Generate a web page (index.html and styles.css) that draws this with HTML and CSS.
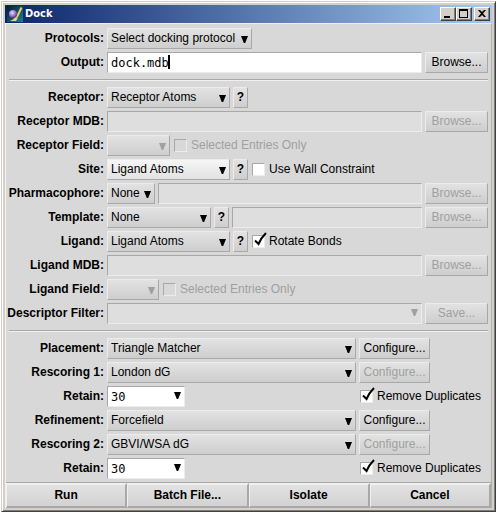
FILE: index.html
```html
<!DOCTYPE html>
<html lang="en">
<head>
<meta charset="utf-8">
<title>Dock</title>
<link rel="stylesheet" href="styles.css">
</head>
<body>
<main class="window">
  <header class="titlebar">
    <svg class="app-icon" viewBox="0 0 16 16" aria-hidden="true">
      <defs>
        <linearGradient id="sea" x1="0" y1="0" x2="1" y2="1"><stop offset="0" stop-color="#071c24"/><stop offset="1" stop-color="#1d8198"/></linearGradient>
        <radialGradient id="ball" cx=".4" cy=".35" r=".7"><stop offset="0" stop-color="#e8dcff"/><stop offset=".5" stop-color="#9c84d4"/><stop offset="1" stop-color="#40306c"/></radialGradient>
      </defs>
      <rect width="16" height="16" fill="url(#sea)"/>
      <path d="M14.500 1.500 10.500 10 7 14" fill="none" stroke="#efcb72" stroke-width="2"/>
      <path d="M3 15h6l2-3-4 1z" fill="#e4d39c"/>
      <circle cx="6" cy="8" r="4" fill="url(#ball)"/>
    </svg>
    <h1 class="title">Dock</h1>
    <div class="window-controls">
      <button class="winbtn" type="button" aria-label="Minimize"><svg viewBox="0 0 12 10"><path d="M2 7h6v2H2z"/></svg></button>
      <button class="winbtn" type="button" aria-label="Maximize"><svg viewBox="0 0 12 10"><path fill-rule="evenodd" d="M1 0h9v9H1zM2 2v6h7V2z"/></svg></button>
      <button class="winbtn close" type="button" aria-label="Close"><svg viewBox="0 0 12 10"><path d="M2 1h2l2 2 2-2h2L7 4.500 10 8H8L6 6 4 8H2l3-3.500z"/></svg></button>
    </div>
  </header>

  <form class="body">
    <section class="group">
      <div class="row">
        <label class="name" for="protocols">Protocols:</label>
        <span class="pick w-protocol"><select id="protocols"><option>Select docking protocol</option></select></span>
      </div>
      <div class="row">
        <label class="name" for="output">Output:</label>
        <span class="field grow"><input id="output" type="text" value="dock.mdb"><span class="caret"></span></span>
        <button class="btn side" type="button">Browse...</button>
      </div>
    </section>

    <section class="group">
      <div class="row">
        <label class="name" for="receptor">Receptor:</label>
        <span class="pick w-atoms"><select id="receptor"><option>Receptor Atoms</option></select></span>
        <button class="btn help" type="button">?</button>
      </div>
      <div class="row">
        <label class="name" for="receptor-mdb">Receptor MDB:</label>
        <span class="field grow"><input id="receptor-mdb" type="text" disabled></span>
        <button class="btn side" type="button" disabled>Browse...</button>
      </div>
      <div class="row">
        <label class="name" for="receptor-field">Receptor Field:</label>
        <span class="pick off w-rfield"><select id="receptor-field" disabled><option></option></select></span>
        <label class="check off"><input type="checkbox" disabled>Selected Entries Only</label>
      </div>
      <div class="row">
        <label class="name" for="site">Site:</label>
        <span class="pick active w-atoms"><select id="site"><option>Ligand Atoms</option></select></span>
        <button class="btn help" type="button">?</button>
        <label class="check"><input type="checkbox">Use Wall Constraint</label>
      </div>
      <div class="row">
        <label class="name" for="pharmacophore">Pharmacophore:</label>
        <span class="pick w-pharma"><select id="pharmacophore"><option>None</option></select></span>
        <span class="field grow"><input type="text" aria-label="Pharmacophore file" disabled></span>
        <button class="btn side" type="button" disabled>Browse...</button>
      </div>
      <div class="row">
        <label class="name" for="template">Template:</label>
        <span class="pick w-template"><select id="template"><option>None</option></select></span>
        <button class="btn help" type="button">?</button>
        <span class="field grow"><input type="text" aria-label="Template file" disabled></span>
        <button class="btn side" type="button" disabled>Browse...</button>
      </div>
      <div class="row">
        <label class="name" for="ligand">Ligand:</label>
        <span class="pick w-atoms"><select id="ligand"><option>Ligand Atoms</option></select></span>
        <button class="btn help" type="button">?</button>
        <label class="check"><input type="checkbox" checked><svg class="tick" viewBox="0 0 14 15"><path d="M2 8.500 5.500 12Q8 6 13 1"/></svg>Rotate Bonds</label>
      </div>
      <div class="row">
        <label class="name" for="ligand-mdb">Ligand MDB:</label>
        <span class="field grow"><input id="ligand-mdb" type="text" disabled></span>
        <button class="btn side" type="button" disabled>Browse...</button>
      </div>
      <div class="row">
        <label class="name" for="ligand-field">Ligand Field:</label>
        <span class="pick off w-lfield"><select id="ligand-field" disabled><option></option></select></span>
        <label class="check off"><input type="checkbox" disabled>Selected Entries Only</label>
      </div>
      <div class="row">
        <label class="name" for="filter">Descriptor Filter:</label>
        <span class="field combo off grow"><input id="filter" type="text" disabled></span>
        <button class="btn side" type="button" disabled>Save...</button>
      </div>
    </section>

    <section class="group">
      <div class="row">
        <label class="name" for="placement">Placement:</label>
        <span class="pick grow"><select id="placement"><option>Triangle Matcher</option></select></span>
        <span class="aside"><button class="btn config" type="button">Configure...</button></span>
      </div>
      <div class="row">
        <label class="name" for="rescoring1">Rescoring 1:</label>
        <span class="pick grow"><select id="rescoring1"><option>London dG</option></select></span>
        <span class="aside"><button class="btn config" type="button" disabled>Configure...</button></span>
      </div>
      <div class="row">
        <label class="name" for="retain1">Retain:</label>
        <span class="grow"><span class="field combo w-retain"><input id="retain1" type="text" value="30"></span></span>
        <span class="aside"><label class="check"><input type="checkbox" checked><svg class="tick" viewBox="0 0 14 15"><path d="M2 8.500 5.500 12Q8 6 13 1"/></svg>Remove Duplicates</label></span>
      </div>
      <div class="row">
        <label class="name" for="refinement">Refinement:</label>
        <span class="pick grow"><select id="refinement"><option>Forcefield</option></select></span>
        <span class="aside"><button class="btn config" type="button">Configure...</button></span>
      </div>
      <div class="row">
        <label class="name" for="rescoring2">Rescoring 2:</label>
        <span class="pick grow"><select id="rescoring2"><option>GBVI/WSA dG</option></select></span>
        <span class="aside"><button class="btn config" type="button" disabled>Configure...</button></span>
      </div>
      <div class="row">
        <label class="name" for="retain2">Retain:</label>
        <span class="grow"><span class="field combo w-retain"><input id="retain2" type="text" value="30"></span></span>
        <span class="aside"><label class="check"><input type="checkbox" checked><svg class="tick" viewBox="0 0 14 15"><path d="M2 8.500 5.500 12Q8 6 13 1"/></svg>Remove Duplicates</label></span>
      </div>
    </section>

    <footer class="actions">
      <button class="action" type="button">Run</button>
      <button class="action" type="button">Batch File...</button>
      <button class="action" type="button">Isolate</button>
      <button class="action" type="button">Cancel</button>
    </footer>
  </form>
</main>
</body>
</html>
```
FILE: styles.css
```css
* { box-sizing: border-box; }

body {
  margin: 0;
  padding: 1px 1px 0;
  background: #fff;
  color: #000;
  font: 12px/15px "Liberation Sans", Arial, sans-serif;
}

button, input, select { font: inherit; color: inherit; margin: 0; }

.window {
  padding: 3px;
  border: 1px solid;
  border-color: #d4d0c8 #404040 #404040 #d4d0c8;
  background: #d4d0c8;
  box-shadow: inset 1px 1px #fff, inset -1px -1px #808080;
}

.titlebar {
  display: flex;
  align-items: center;
  height: 18px;
  padding: 0 2px;
  background: linear-gradient(90deg, #0a246a, #a6caf0);
}
.app-icon { width: 16px; height: 16px; }
.title {
  flex: 1;
  margin: 0;
  padding-left: 2px;
  color: #fff;
  font: bold 11px/16px "DejaVu Sans Condensed", "DejaVu Sans", sans-serif;
}
.window-controls { display: flex; }
.winbtn {
  width: 16px;
  height: 14px;
  padding: 1px;
  border: 1px solid;
  border-color: #fff #404040 #404040 #fff;
  background: #d4d0c8;
  box-shadow: inset -1px -1px #808080;
}
.winbtn svg { display: block; width: 12px; height: 10px; }
.close { margin-left: 2px; }

.body {
  border: 1px solid;
  border-color: #f0f0f0 #b0b0b0 #b0b0b0 #f0f0f0;
  border-bottom: 0;
  background: #d8d8d8;
}

.group {
  display: grid;
  gap: 3px;
  margin: 0 3px;
  padding: 4px 0 6px;
}
.group + .group {
  padding-top: 7px;
  border-top: 1px solid #a8a8a8;
  box-shadow: inset 0 1px #f0f0f0;
}
.group:nth-last-of-type(1) { padding-bottom: 3px; }
.row { display: flex; align-items: center; gap: 3px; height: 21px; }
.name {
  display: flex;
  justify-content: flex-end;
  width: 95px;
  font-weight: bold;
  white-space: nowrap;
}
.grow { flex: 1; min-width: 0; }

.pick, .field { position: relative; display: block; height: 21px; }
.pick select, .btn {
  height: 21px;
  border: 1px solid;
  border-color: #ececec #a8a8a8 #a8a8a8 #ececec;
  border-radius: 0;
  background: linear-gradient(#e2e2e2, #cecece);
  white-space: nowrap;
}
.pick select { appearance: none; width: 100%; padding: 0 0 0 3px; display: block; opacity: 1; }
.pick.active select { background: linear-gradient(#f6f6f6, #e2e2e2); }
.pick::after, .combo::after {
  content: "";
  position: absolute;
  top: 8px;
  right: 4px;
  width: 7px;
  height: 7px;
  background: #000;
  clip-path: polygon(0 0, 100% 0, 60% 100%, 40% 100%);
  pointer-events: none;
}
.combo::after { top: 6px; }
.pick.off::after, .combo.off::after { background: #a0a0a0; }

.field input {
  display: block;
  width: 100%;
  height: 21px;
  padding: 1px 3px 0;
  border: 1px solid;
  border-color: #a8a8a8 #ececec #ececec #a8a8a8;
  background: #fff;
  font: 12px/17px "DejaVu Sans Mono", monospace;
}
.field input:disabled { background: #dedede; }
.caret { position: absolute; top: 3px; left: 61px; width: 2px; height: 14px; background: #000; }

.btn { padding: 0; text-align: center; }
.btn:disabled { color: #a0a0a0; }
.side { width: 63px; }
.help { width: 15px; font-weight: bold; }
.config { width: 71px; }

.check { display: flex; align-items: center; position: relative; padding-left: 1px; white-space: nowrap; }
.check input {
  appearance: none;
  width: 13px;
  height: 13px;
  margin-right: 4px;
  border: 1px solid;
  border-color: #a8a8a8 #ececec #ececec #a8a8a8;
  background: #fff;
}
.check.off { color: #a0a0a0; }
.check.off input { background: #d8d8d8; }
.tick { position: absolute; left: 2px; top: -2px; width: 14px; height: 15px; fill: none; stroke: #000; stroke-width: 2; pointer-events: none; }

.aside { width: 129px; }

.w-protocol { width: 145px; }
.w-atoms { width: 123px; }
.w-rfield { width: 63px; }
.w-lfield { width: 52px; }
.w-pharma { width: 48px; }
.w-template { width: 104px; }
.w-retain { width: 78px; }

.actions { display: grid; grid-template-columns: repeat(4, 1fr); border-top: 1px solid #a8a8a8; }
.action {
  height: 25px;
  padding: 0;
  border: 1px solid;
  border-color: #f0f0f0 #a8a8a8 #a8a8a8 #f0f0f0;
  border-width: 2px 2px 2px 1px;
  background: linear-gradient(#e2e2e2, #d2d2d2);
  font-weight: bold;
}
```
